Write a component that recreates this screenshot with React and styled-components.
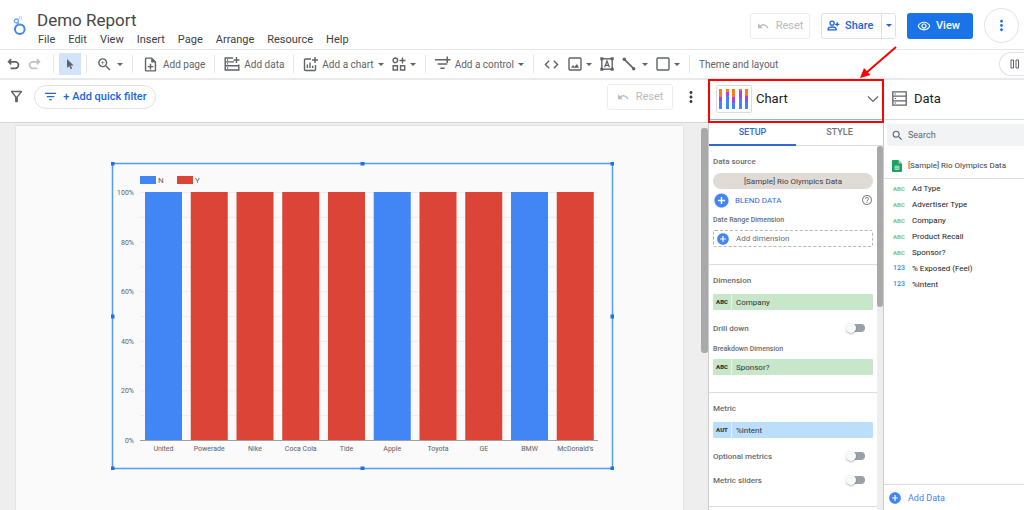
import React, { useState } from 'react';
import styled, { createGlobalStyle } from 'styled-components';
import {
  MdOutlineZoomIn,
  MdOutlineNoteAdd,
  MdCode,
  MdFilterList,
  MdOutlineFilterAlt,
  MdOutlineRemoveRedEye,
  MdMoreVert,
  MdSearch,
  MdAddCircle,
  MdHelpOutline,
} from 'react-icons/md';

const menus = ['File', 'Edit', 'View', 'Insert', 'Page', 'Arrange', 'Resource', 'Help'];

const companies = [
  { name: 'United', sponsor: 'N' },
  { name: 'Powerade', sponsor: 'Y' },
  { name: 'Nike', sponsor: 'Y' },
  { name: 'Coca Cola', sponsor: 'Y' },
  { name: 'Tide', sponsor: 'Y' },
  { name: 'Apple', sponsor: 'N' },
  { name: 'Toyota', sponsor: 'Y' },
  { name: 'GE', sponsor: 'Y' },
  { name: 'BMW', sponsor: 'N' },
  { name: "McDonald's", sponsor: 'Y' },
];

const fields = [
  { type: 'ABC', name: 'Ad Type' },
  { type: 'ABC', name: 'Advertiser Type' },
  { type: 'ABC', name: 'Company' },
  { type: 'ABC', name: 'Product Recall' },
  { type: 'ABC', name: 'Sponsor?' },
  { type: '123', name: '% Exposed (Feel)' },
  { type: '123', name: '%intent' },
];

const Icon = ({ size = 14, box = 14, children }) => (
  <svg
    width={size}
    height={size}
    viewBox={`0 0 ${box} ${box}`}
    fill="none"
    stroke="currentColor"
    strokeWidth="1.4"
    aria-hidden="true"
  >
    {children}
  </svg>
);

const Logo = () => (
  <svg width="14" height="21" viewBox="0 0 14 21" fill="none" aria-hidden="true">
    <circle cx="6.8" cy="14.2" r="4.8" stroke="#4285f4" strokeWidth="2" />
    <circle cx="3.4" cy="6" r="2" stroke="#6ea2f7" strokeWidth="1.3" />
    <path d="M4.6 7.6 5.8 9.6" stroke="#6ea2f7" strokeWidth="1.2" />
    <circle cx="7.4" cy="2.8" r="1.3" stroke="#a9c7fa" strokeWidth="0.9" />
  </svg>
);

const UndoIcon = () => (
  <Icon>
    <path d="M5.2 2.2 2.6 4.8l2.6 2.6M2.6 4.8h6.6a3.300 3.300 0 0 1 0 6.600H4.500" strokeWidth="1.7" />
  </Icon>
);

const RedoIcon = () => (
  <Icon>
    <path d="M8.8 2.2 11.4 4.8 8.8 7.4M11.4 4.8H4.8a3.300 3.300 0 0 0 0 6.600H9.500" strokeWidth="1.7" />
  </Icon>
);

const ResetIcon = () => (
  <Icon size={12} box={12}>
    <path d="M1 3.2v5h5z" fill="currentColor" stroke="none" />
    <path d="M3 6.4c2.5-2.7 6.4-2.1 8 1.8" />
  </Icon>
);

const CursorIcon = () => (
  <Icon>
    <path d="M4 2v9l2.2-2 1.5 3.3 1.5-.7-1.500-3.200h3z" fill="currentColor" stroke="none" />
  </Icon>
);

const DataTableIcon = () => (
  <Icon size={16} box={16}>
    <path d="M9 2H1.200v12h13.600V9.800H1.200M1.200 5.900H10M14.800 9.800V8.500M12.500 1v6M9.500 4h6" />
    <path d="M3 4h1.200M3 7.900h1.200M3 12h1.200" />
  </Icon>
);

const AddChartIcon = () => (
  <Icon size={15} box={15}>
    <path d="M8 2H2.500Q1.500 2 1.500 3v9.500q0 1 1 1h9q1 0 1-1V8M12 0v6M9 3h6" />
    <path d="M4.400 7.500V11M7 5.500V11M9.700 8.800V11" />
  </Icon>
);

const ComponentsIcon = () => (
  <Icon>
    <circle cx="3.3" cy="3.3" r="2.3" />
    <path d="M10.500.5v6M7.500 3.500h6M1.200 8.800h4.200V13H1.200zM8.500 8.800h4.200V13H8.500z" />
  </Icon>
);

const AddControlIcon = () => (
  <Icon size={16} box={15}>
    <path d="M0 3.500h8.500M2.500 7.500h9M5 11.500h4M11.500.5v6M8.500 3.500h6" />
  </Icon>
);

const ImageIcon = () => (
  <Icon>
    <rect x="1" y="1" width="12" height="12" rx="1" />
    <path d="M3 10.800 5 8l1.500 1.700L9 7l2 3.800z" fill="currentColor" stroke="none" />
  </Icon>
);

const TextBoxIcon = () => (
  <Icon>
    <rect x="1.8" y="1.8" width="10.4" height="10.4" />
    <path d="M4.600 10.300 7 4l2.400 6.300M5.400 8.400h3.200" strokeWidth="1.2" />
    <path
      d="M.3.3h3v3h-3zM10.700.3h3v3h-3zM.3 10.700h3v3h-3zM10.700 10.700h3v3h-3z"
      fill="currentColor"
      stroke="none"
    />
  </Icon>
);

const LineIcon = () => (
  <Icon>
    <path d="M2.300 2.300l9.400 9.400" strokeWidth="1.7" />
    <circle cx="2.3" cy="2.3" r="1.7" fill="currentColor" stroke="none" />
    <circle cx="11.7" cy="11.7" r="1.7" fill="currentColor" stroke="none" />
  </Icon>
);

const ShapeIcon = () => (
  <Icon>
    <rect x="1" y="1" width="12" height="12" rx="1" />
  </Icon>
);

const PersonAddIcon = () => (
  <Icon size={13}>
    <circle cx="5.5" cy="4.5" r="2.2" />
    <path d="M1.200 11.700v-1q.3-2.100 4.300-2.100t4.300 2.100v1zM11 3.500v4.400M8.800 5.700h4.400" />
  </Icon>
);

const PauseIcon = () => (
  <Icon size={10} box={10}>
    <path d="M1 1h2.500v8H1zM6 1h2.500v8H6z" strokeWidth="1" />
  </Icon>
);

const StorageIcon = () => (
  <Icon size={15} box={15}>
    <path d="M.8.8h13.400v13.400H.8zM.8 5.200h13.400M.8 9.800h13.400" strokeWidth="1.3" />
    <path d="M2.600 3h1.500M2.600 7.500h1.500M2.600 12h1.500" strokeWidth="1.2" />
  </Icon>
);

const SheetIcon = () => (
  <svg width="10" height="12" viewBox="0 0 10 12" aria-hidden="true">
    <path d="M1 0h5.500L10 3.500V11q0 1-1 1H1q-1 0-1-1V1q0-1 1-1z" fill="#1ba261" />
    <path d="M6.500 0v3.500H10z" fill="#8ed1b1" />
    <path d="M3 6h4v3.500H3zM3 7.750h4M5 6v3.500" stroke="#d5efe2" strokeWidth="0.7" fill="none" />
  </svg>
);

const Chevron = () => (
  <svg width="12" height="12" viewBox="0 0 12 12" fill="none" stroke="#5f6368" strokeWidth="1.2" aria-hidden="true">
    <path d="M1 3.500 6 8.500l5-5" />
  </svg>
);

const stacks = [
  [8, 4, 8],
  [3, 4, 13],
  [8, 6, 6],
  [2, 7, 11],
  [7, 6, 7],
];

const StackedBarIcon = () => (
  <svg width="30" height="20" viewBox="0 0 30 20" aria-hidden="true">
    {stacks.map(([top, mid, low], i) => {
      const x = Math.round(i * 6.5);
      return (
        <g key={x}>
          <rect x={x} y="0" width="3" height={top} fill="#fa7b17" />
          <rect x={x} y={top} width="3" height={mid} fill="#a142f4" />
          <rect x={x} y={top + mid} width="3" height={low} fill="#4285f4" />
        </g>
      );
    })}
  </svg>
);

const colors = { N: '#4285f4', Y: '#db4437' };

const StackedChart = () => {
  const left = 29;
  const top = 30;
  const height = 248;
  const step = 45.75;
  const ticks = [100, 80, 60, 40, 20, 0];

  return (
    <ChartSvg viewBox="0 0 503 308" role="img" aria-label="Sponsor recall by company">
      <rect x="1.5" y="1.5" width="500" height="305" fill="none" stroke="#5a9bf2" strokeWidth="1.5" />
      <rect x={left} y="14" width="16" height="8" fill={colors.N} />
      <text className="legend" x="47" y="21">N</text>
      <rect x="66" y="14" width="16" height="8" fill={colors.Y} />
      <text className="legend" x="84" y="21">Y</text>
      {Array.from({ length: 10 }, (_, i) => (
        <line
          key={i}
          x1={left}
          x2={left + 458}
          y1={top + 0.5 + (i * height) / 10}
          y2={top + 0.5 + (i * height) / 10}
          stroke="#ececec"
        />
      ))}
      {ticks.map((tick) => (
        <text key={tick} className="tick" x="23" y={top + 3 + ((100 - tick) * height) / 100} textAnchor="end">
          {tick}%
        </text>
      ))}
      {companies.map(({ name, sponsor }, i) => (
        <g key={name}>
          <rect x={34 + i * step} y={top} width="37" height={height} fill={colors[sponsor]} />
          <text className="tick" x={52.5 + i * step} y="289" textAnchor="middle">
            {name}
          </text>
        </g>
      ))}
      <line x1={left} x2={left + 458} y1="278.5" y2="278.5" stroke="#9e9e9e" />
      {[[0, 0], [250, 0], [500, 0], [0, 153], [500, 153], [0, 305], [250, 305], [500, 305]].map(([x, y]) => (
        <rect key={`${x}-${y}`} x={x - 0.5} y={y - 0.5} width="4" height="4" fill="#1a73e8" />
      ))}
    </ChartSvg>
  );
};

const SwitchRow = ({ label }) => {
  const [on, setOn] = useState(false);
  return (
    <SwitchLabel>
      {label}
      <Switch type="checkbox" role="switch" checked={on} onChange={() => setOn(!on)} />
    </SwitchLabel>
  );
};

const App = () => {
  const [tab, setTab] = useState('SETUP');
  const [search, setSearch] = useState('');

  return (
    <Main>
      <GlobalStyle />
      <Header>
        <Logo />
        <TitleBox>
          <Title>Demo Report</Title>
          <MenuBar>
            {menus.map((menu) => (
              <MenuButton key={menu}>{menu}</MenuButton>
            ))}
          </MenuBar>
        </TitleBox>
        <Actions>
          <ResetButton disabled>
            <ResetIcon />
            Reset
          </ResetButton>
          <ShareGroup>
            <ShareButton>
              <PersonAddIcon />
              Share
            </ShareButton>
            <ShareMore aria-label="Share options">
              <Caret />
            </ShareMore>
          </ShareGroup>
          <ViewButton>
            <MdOutlineRemoveRedEye size="14" />
            View
          </ViewButton>
          <MoreButton aria-label="More options">
            <MdMoreVert size="17" />
          </MoreButton>
        </Actions>
      </Header>

      <Toolbar>
        <Group $wide>
          <Tool aria-label="Undo"><UndoIcon /></Tool>
          <Tool aria-label="Redo" $faded><RedoIcon /></Tool>
        </Group>
        <Group $tight>
          <SelectTool aria-label="Selection mode"><CursorIcon /></SelectTool>
        </Group>
        <Group>
          <Tool aria-label="Zoom"><MdOutlineZoomIn size="17" /><Caret /></Tool>
        </Group>
        <Group>
          <Tool><MdOutlineNoteAdd size="17" />Add page</Tool>
        </Group>
        <Group>
          <Tool><DataTableIcon />Add data</Tool>
        </Group>
        <Group>
          <Tool><AddChartIcon />Add a chart<Caret /></Tool>
          <Tool aria-label="Community visualizations"><ComponentsIcon /><Caret /></Tool>
        </Group>
        <Group>
          <Tool><AddControlIcon />Add a control<Caret /></Tool>
        </Group>
        <Group>
          <Tool aria-label="Embed URL"><MdCode size="17" /></Tool>
          <Tool aria-label="Image"><ImageIcon /><Caret /></Tool>
          <Tool aria-label="Text"><TextBoxIcon /></Tool>
          <Tool aria-label="Line" $spread><LineIcon /><Caret /></Tool>
          <Tool aria-label="Shape"><ShapeIcon /><Caret /></Tool>
        </Group>
        <Group>
          <Tool>Theme and layout</Tool>
        </Group>
        <PauseButton aria-label="Pause updates"><PauseIcon /></PauseButton>
      </Toolbar>

      <Body>
        <Report>
          <FilterBar>
            <MdOutlineFilterAlt size="17" />
            <QuickFilter>
              <MdFilterList size="15" />
              + Add quick filter
            </QuickFilter>
            <FilterActions>
              <ResetButton disabled $large>
                <ResetIcon />
                Reset
              </ResetButton>
              <DotsButton aria-label="Filter bar options">
                <MdMoreVert size="18" />
              </DotsButton>
            </FilterActions>
          </FilterBar>
          <Canvas>
            <Page>
              <StackedChart />
            </Page>
            <Track $width={7} $top={5}>
              <Thumb $size={225} />
            </Track>
          </Canvas>
        </Report>

        <ChartPanel>
          <ChartHeader>
            <ChartType aria-label="Change chart type">
              <StackedBarIcon />
            </ChartType>
            <PanelTitle>Chart</PanelTitle>
            <Chevron />
            <Highlight />
            <Arrow width="40" height="36" viewBox="0 0 40 36" aria-hidden="true">
              <path d="M38 2 8 28" stroke="#ff0000" strokeWidth="2" />
              <path d="M2 33 6 23l6.500 7z" fill="#ff0000" />
            </Arrow>
          </ChartHeader>
          <Tabs role="tablist">
            {['SETUP', 'STYLE'].map((name) => (
              <Tab key={name} role="tab" aria-selected={tab === name} $active={tab === name} onClick={() => setTab(name)}>
                {name}
              </Tab>
            ))}
          </Tabs>
          <PanelScroll>
            <Sections>
              <Section>
                <Label $close>Data source</Label>
                <SourceButton>[Sample] Rio Olympics Data</SourceButton>
                <BlendRow>
                  <BlendButton>
                    <MdAddCircle size="17" />
                    BLEND DATA
                  </BlendButton>
                  <MdHelpOutline size="12" />
                </BlendRow>
                <Label $small>Date Range Dimension</Label>
                <AddDimension>
                  <MdAddCircle size="14" />
                  Add dimension
                </AddDimension>
              </Section>
              <Section>
                <Label>Dimension</Label>
                <Chip><ChipType>ABC</ChipType>Company</Chip>
                <SwitchRow label="Drill down" />
                <Label $small>Breakdown Dimension</Label>
                <Chip><ChipType>ABC</ChipType>Sponsor?</Chip>
              </Section>
              <Section>
                <Label>Metric</Label>
                <Chip $metric><ChipType>AUT</ChipType>%intent</Chip>
                <SwitchRow label="Optional metrics" />
                <SwitchRow label="Metric sliders" />
              </Section>
            </Sections>
            <Track $width={6} $top={0}>
              <Thumb $size={161} />
            </Track>
          </PanelScroll>
        </ChartPanel>

        <DataPanel>
          <DataHeader>
            <StorageIcon />
            <PanelTitle>Data</PanelTitle>
          </DataHeader>
          <SearchBox>
            <MdSearch size="13" />
            <SearchInput
              aria-label="Search fields"
              placeholder="Search"
              value={search}
              onChange={(e) => setSearch(e.target.value)}
            />
          </SearchBox>
          <SourceRow>
            <SheetIcon />
            [Sample] Rio Olympics Data
          </SourceRow>
          <FieldList>
            {fields
              .filter((field) => field.name.toLowerCase().includes(search.toLowerCase()))
              .map((field) => (
                <Field key={field.name}>
                  <FieldType $number={field.type === '123'}>{field.type}</FieldType>
                  {field.name}
                </Field>
              ))}
          </FieldList>
          <AddData>
            <MdAddCircle size="14" />
            Add Data
          </AddData>
        </DataPanel>
      </Body>
    </Main>
  );
};

const GlobalStyle = createGlobalStyle`
  * {
    box-sizing: border-box;
  }
  body {
    margin: 0;
    font-family: Roboto, 'Liberation Sans', sans-serif;
    background: #fff;
    color: #3c4043;
  }
  button, input {
    margin: 0;
    padding: 0;
    border: none;
    background: none;
    font: inherit;
    color: inherit;
  }
  button {
    cursor: pointer;
    white-space: nowrap;
  }
  svg {
    flex: none;
  }
`;
const Main = styled.div`
  display: flex;
  flex-direction: column;
  height: 100vh;
  overflow: hidden;
`;
const Header = styled.header`
  display: flex;
  align-items: center;
  height: 50px;
  padding: 2px 5px 0 13px;
  border-bottom: 1px solid #e4e5e7;
`;
const TitleBox = styled.div`
  flex: 1;
  padding: 5px 0 0 10px;
`;
const Title = styled.h1`
  margin: 0;
  font-size: 17px;
  line-height: 22px;
  font-weight: 400;
  color: #444746;
`;
const MenuBar = styled.nav`
  display: flex;
  gap: 13px;
  padding: 1px 0 0 1px;
`;
const MenuButton = styled.button`
  font-size: 11px;
  line-height: 16px;
`;
const Actions = styled.div`
  display: flex;
  align-items: center;
  gap: 11px;
`;
const ResetButton = styled.button`
  display: flex;
  align-items: center;
  justify-content: center;
  gap: 7px;
  width: ${(props) => (props.$large ? 66 : 60)}px;
  height: 26px;
  border: 1px solid #eceded;
  border-radius: 3px;
  font-size: 11px;
  color: #b9bbbd;
  cursor: default;
`;
const ShareGroup = styled.div`
  display: flex;
  height: 26px;
  border: 1px solid #dfe1e5;
  border-radius: 3px;
  color: #1a63d8;
`;
const ShareButton = styled.button`
  display: flex;
  align-items: center;
  gap: 5px;
  width: 59px;
  padding-left: 5px;
  font-size: 11px;
  font-weight: 500;
`;
const ShareMore = styled.button`
  display: flex;
  align-items: center;
  justify-content: center;
  width: 14px;
  border-left: 1px solid #dfe1e5;
`;
const ViewButton = styled.button`
  display: flex;
  align-items: center;
  gap: 5px;
  width: 66px;
  height: 26px;
  padding-left: 10px;
  border-radius: 3px;
  background: #1a73e8;
  color: #fff;
  font-size: 11px;
  font-weight: 500;
`;
const MoreButton = styled.button`
  display: flex;
  align-items: center;
  justify-content: center;
  width: 35px;
  height: 35px;
  border: 1px solid #e2e3e5;
  border-radius: 50%;
  color: #1a73e8;
`;
const Caret = styled.span`
  border: 3px solid transparent;
  border-top-color: currentColor;
  border-bottom: none;
`;
const Toolbar = styled.div`
  display: flex;
  align-items: center;
  height: 30px;
  border-bottom: 2px solid #e8e9eb;
`;
const Group = styled.div`
  display: flex;
  align-items: center;
  gap: 8px;
  height: 18px;
  padding: 0 ${(props) => (props.$tight ? 5 : 9)}px;
  ${(props) => props.$wide && 'padding: 0 11px 0 6px;'}

  & + & {
    border-left: 1px solid #e3e4e6;
  }
`;
const Tool = styled.button`
  display: flex;
  align-items: center;
  gap: ${(props) => (props.$spread ? 6 : 4)}px;
  font-size: 10px;
  color: ${(props) => (props.$faded ? '#c0c2c4' : '#5f6368')};
`;
const SelectTool = styled.button`
  display: flex;
  align-items: center;
  justify-content: center;
  width: 22px;
  height: 22px;
  background: #d2e3fc;
  color: #5f6368;
`;
const PauseButton = styled.button`
  display: flex;
  align-items: center;
  width: 25px;
  height: 24px;
  margin-left: auto;
  padding-left: 10px;
  border: 1px solid #dfe1e5;
  border-right: none;
  border-radius: 12px 0 0 12px;
  color: #5f6368;
`;
const Body = styled.div`
  flex: 1;
  display: flex;
  min-height: 0;
`;
const Report = styled.main`
  flex: 1;
  display: flex;
  flex-direction: column;
  min-width: 0;
`;
const FilterBar = styled.div`
  display: flex;
  align-items: center;
  gap: 9px;
  height: 43px;
  padding: 0 8px 9px;
  border-bottom: 1px solid #d5d6d8;
  color: #5f6368;
`;
const QuickFilter = styled.button`
  display: flex;
  align-items: center;
  justify-content: center;
  gap: 5px;
  width: 122px;
  height: 24px;
  border: 1px solid #e0e2e5;
  border-radius: 12px;
  color: #1a66e0;
  font-size: 11px;
  font-weight: 500;
`;
const FilterActions = styled.div`
  display: flex;
  align-items: center;
  gap: 9px;
  margin-left: auto;
`;
const DotsButton = styled.button`
  display: flex;
  color: #3c4043;
`;
const Canvas = styled.div`
  flex: 1;
  display: flex;
  min-height: 0;
  background: #eeeeee;
`;
const Page = styled.section`
  flex: 1;
  margin: 3px 18px 0 16px;
  padding: 36px 69px 0 95px;
  background: #fafafa;
  box-shadow: 0 0 2px #cfcfcf;
  overflow: hidden;
`;
const ChartSvg = styled.svg`
  display: block;
  width: 100%;
  height: auto;

  .tick {
    font-size: 7px;
    fill: #616161;
  }
  .legend {
    font-size: 8px;
    fill: #616161;
  }
`;
const Track = styled.div`
  width: ${(props) => props.$width}px;
  padding-top: ${(props) => props.$top}px;
  background: #eeeeee;
`;
const Thumb = styled.div`
  height: ${(props) => props.$size}px;
  border-radius: 3px;
  background: #a9a9a9;
`;
const ChartPanel = styled.aside`
  display: flex;
  flex-direction: column;
  width: 176px;
  border-left: 1px solid #c9cbce;
  border-right: 1px solid #c9cbce;
`;
const ChartHeader = styled.div`
  position: relative;
  display: flex;
  align-items: center;
  gap: 4px;
  height: 40px;
  margin-bottom: 3px;
  padding: 0 4px 2px 7px;
  border-bottom: 1px solid #8ab4f8;
`;
const ChartType = styled.button`
  display: flex;
  align-items: center;
  justify-content: center;
  width: 36px;
  height: 28px;
  border: 1px solid #dadce0;
  border-radius: 2px;
`;
const PanelTitle = styled.h2`
  flex: 1;
  margin: 0;
  font-size: 13px;
  font-weight: 400;
  color: #202124;
`;
const Highlight = styled.div`
  position: absolute;
  inset: -1px -1px -4px -1px;
  border: 2px solid #ff0000;
  pointer-events: none;
`;
const Arrow = styled.svg`
  position: absolute;
  top: -35px;
  right: -15px;
  z-index: 1;
  pointer-events: none;
`;
const Tabs = styled.div`
  display: flex;
  height: 23px;
  border-bottom: 1px solid #dadce0;
`;
const Tab = styled.button`
  flex: 1;
  height: 23px;
  padding-bottom: 4px;
  border-bottom: 2px solid ${(props) => (props.$active ? '#3367d6' : 'transparent')};
  font-size: 9px;
  font-weight: 500;
  color: ${(props) => (props.$active ? '#3367d6' : '#757575')};
`;
const PanelScroll = styled.div`
  flex: 1;
  display: flex;
  min-height: 0;
  overflow: hidden;
`;
const Sections = styled.div`
  flex: 1;
`;
const Section = styled.section`
  padding: 10px 4px 17px;
  border-bottom: 1px solid #dadce0;
`;
const Label = styled.h3`
  margin: ${(props) => (props.$small ? '6px 0 4px' : '0 0 7px')};
  ${(props) => props.$close && 'margin-bottom: 5px;'}
  font-size: ${(props) => (props.$small ? 7 : 8)}px;
  line-height: 12px;
  font-weight: 500;
  color: #6b6b6b;
`;
const SourceButton = styled.button`
  display: block;
  width: 100%;
  height: 16px;
  border-radius: 8px;
  background: #e0dbd7;
  color: #3c4043;
  font-size: 8px;
`;
const BlendRow = styled.div`
  display: flex;
  align-items: center;
  justify-content: space-between;
  height: 16px;
  margin-top: 3px;
  color: #80868b;
`;
const BlendButton = styled.button`
  display: flex;
  align-items: center;
  gap: 5px;
  font-size: 8px;
  color: #3367d6;

  svg {
    color: #4285f4;
  }
`;
const AddDimension = styled.button`
  display: flex;
  align-items: center;
  gap: 6px;
  width: 100%;
  height: 17px;
  padding-left: 2px;
  border: 1px dashed #b4b6b8;
  border-radius: 2px;
  font-size: 8px;
  color: #6b6b6b;

  svg {
    color: #4285f4;
  }
`;
const Chip = styled.button`
  display: flex;
  align-items: center;
  gap: 4px;
  width: 100%;
  height: 16px;
  border-radius: 1px;
  background: ${(props) => (props.$metric ? '#bbdefb' : '#c8e6c9')};
  color: #303336;
  font-size: 8px;
`;
const ChipType = styled.span`
  width: 19px;
  border-right: 1px solid #ffffff99;
  font-size: 6px;
  line-height: 16px;
  font-weight: 900;
  text-align: center;
`;
const SwitchLabel = styled.label`
  display: flex;
  align-items: center;
  justify-content: space-between;
  height: 12px;
  margin: 12px 0 9px;
  padding-right: 8px;
  font-size: 8px;
  font-weight: 500;
  color: #6b6b6b;

  &:last-child {
    margin-bottom: 3px;
  }
`;
const Switch = styled.input`
  appearance: none;
  position: relative;
  width: 18px;
  height: 8px;
  border-radius: 4px;
  background: #9aa0a6;

  &::before {
    content: '';
    position: absolute;
    top: -1px;
    left: -1px;
    width: 10px;
    height: 10px;
    border-radius: 50%;
    background: #fafafa;
    box-shadow: 0 1px 2px #0000004d;
  }
  &:checked::before {
    left: 9px;
    background: #4285f4;
  }
`;
const DataPanel = styled.aside`
  display: flex;
  flex-direction: column;
  width: 140px;
`;
const DataHeader = styled.div`
  display: flex;
  align-items: center;
  gap: 7px;
  height: 40px;
  padding: 0 8px 2px;
  border-bottom: 1px solid #dadce0;
  color: #5f6368;
`;
const SearchBox = styled.div`
  display: flex;
  align-items: center;
  gap: 4px;
  height: 22px;
  margin: 4px 0 0 3px;
  padding-left: 4px;
  border-radius: 4px 0 0 4px;
  background: #f1f3f4;
  color: #5f6368;
`;
const SearchInput = styled.input`
  flex: 1;
  min-width: 0;
  font-size: 9px;
  outline: none;

  &::placeholder {
    color: #5f6368;
  }
`;
const SourceRow = styled.div`
  display: flex;
  align-items: center;
  gap: 6px;
  height: 33px;
  padding: 7px 0 0 8px;
  border-bottom: 1px solid #dadce0;
  font-size: 8px;
  white-space: nowrap;
`;
const FieldList = styled.ul`
  flex: 1;
  margin: 0;
  padding: 1px 0 0 9px;
  list-style: none;
`;
const Field = styled.li`
  display: flex;
  align-items: center;
  height: 16px;
  font-size: 8px;
  color: #202124;
`;
const FieldType = styled.span`
  width: 19px;
  font-size: ${(props) => (props.$number ? 7 : 6)}px;
  font-weight: ${(props) => (props.$number ? 500 : 900)};
  color: ${(props) => (props.$number ? '#4285f4' : '#81c784')};
`;
const AddData = styled.button`
  display: flex;
  align-items: center;
  gap: 6px;
  height: 26px;
  padding-left: 4px;
  border-top: 1px solid #dadce0;
  font-size: 9px;
  color: #4285f4;
`;

export default App;
